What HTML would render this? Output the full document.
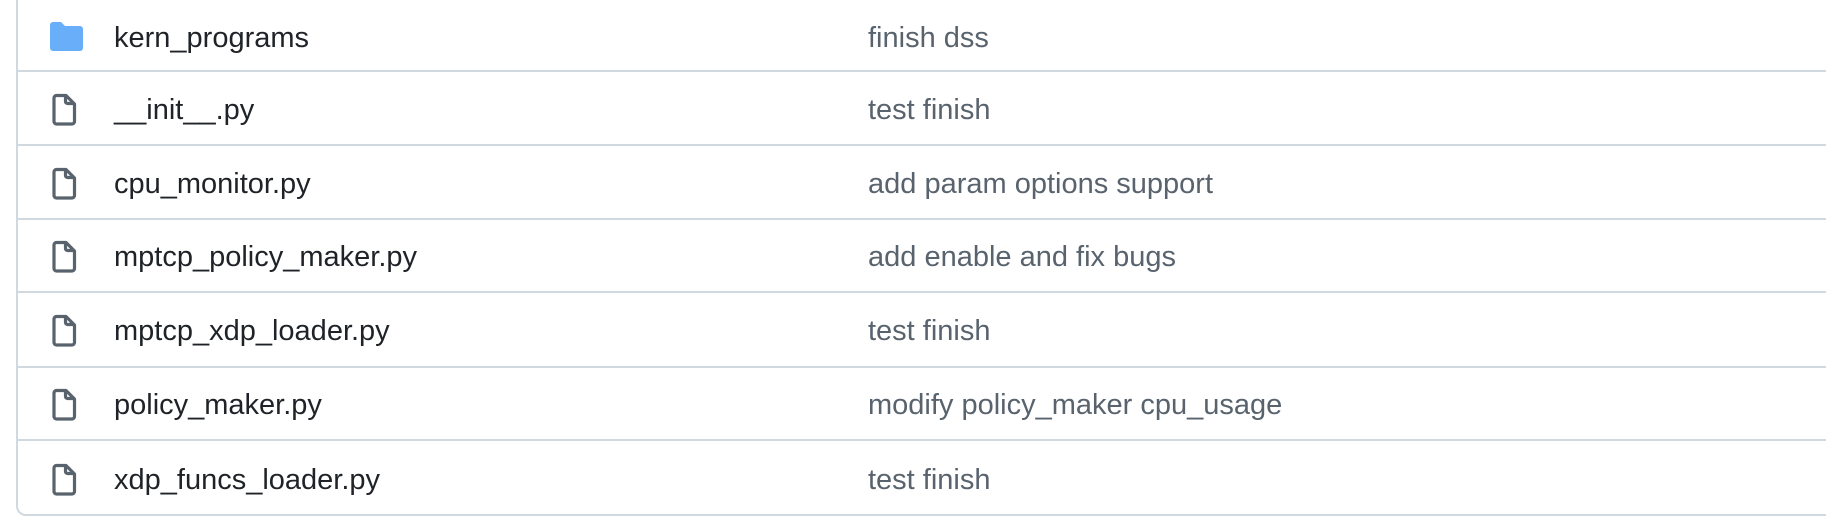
<!DOCTYPE html>
<html><head><meta charset="utf-8"><style>
html,body{margin:0;padding:0;background:#fff;width:1826px;height:522px;overflow:hidden;font-family:"Liberation Sans",Arial,sans-serif}
.box{position:absolute;left:16px;top:-20px;width:1830px;height:536px;border:2px solid #d1d9e0;border-radius:10px;box-sizing:border-box}
.sep{position:absolute;left:17px;right:0;height:2px;background:#d1d9e0}
.row{position:absolute;left:0;width:1826px;height:40px}
.name{position:absolute;left:114px;top:4px;font-size:29px;color:#1f2328;line-height:32px}
.msg{position:absolute;left:868px;top:4px;font-size:29px;color:#59636e;line-height:32px}
.ic{position:absolute;left:50px;top:4px}
</style></head><body>
<div class="box"></div>
<div class="sep" style="top:70px"></div>
<div class="sep" style="top:144px"></div>
<div class="sep" style="top:218px"></div>
<div class="sep" style="top:291px"></div>
<div class="sep" style="top:366px"></div>
<div class="sep" style="top:439px"></div>

<div class="row" style="top:18px">
<svg class="ic" width="33" height="29" viewBox="0 0 33 29" style="top:4px"><path d="M0 3a3 3 0 0 1 3-3h8l4 4h15a3 3 0 0 1 3 3v19a3 3 0 0 1-3 3H3a3 3 0 0 1-3-3z" fill="#68aef8"/></svg>
<div class="name">kern_programs</div><div class="msg">finish dss</div></div>

<div class="row" style="top:90px"><svg class="ic" width="33" height="33" viewBox="0 0 33 33" style="top:3px"><path d="M6.5 2.5h9.5l8.5 8.5v17.5a2.5 2.5 0 0 1-2.5 2.5H6.5a2.5 2.5 0 0 1-2.5-2.5v-23.5a2.5 2.5 0 0 1 2.5-2.5zM15.5 2.5v6a2 2 0 0 0 2 2h6.5" fill="none" stroke="#59636e" stroke-width="3.2" stroke-linejoin="round"/></svg><div class="name">__init__.py</div><div class="msg">test finish</div></div>

<div class="row" style="top:164px"><svg class="ic" width="33" height="33" viewBox="0 0 33 33" style="top:3px"><path d="M6.5 2.5h9.5l8.5 8.5v17.5a2.5 2.5 0 0 1-2.5 2.5H6.5a2.5 2.5 0 0 1-2.5-2.5v-23.5a2.5 2.5 0 0 1 2.5-2.5zM15.5 2.5v6a2 2 0 0 0 2 2h6.5" fill="none" stroke="#59636e" stroke-width="3.2" stroke-linejoin="round"/></svg><div class="name">cpu_monitor.py</div><div class="msg">add param options support</div></div>

<div class="row" style="top:237px"><svg class="ic" width="33" height="33" viewBox="0 0 33 33" style="top:3px"><path d="M6.5 2.5h9.5l8.5 8.5v17.5a2.5 2.5 0 0 1-2.5 2.5H6.5a2.5 2.5 0 0 1-2.5-2.5v-23.5a2.5 2.5 0 0 1 2.5-2.5zM15.5 2.5v6a2 2 0 0 0 2 2h6.5" fill="none" stroke="#59636e" stroke-width="3.2" stroke-linejoin="round"/></svg><div class="name">mptcp_policy_maker.py</div><div class="msg">add enable and fix bugs</div></div>

<div class="row" style="top:311px"><svg class="ic" width="33" height="33" viewBox="0 0 33 33" style="top:3px"><path d="M6.5 2.5h9.5l8.5 8.5v17.5a2.5 2.5 0 0 1-2.5 2.5H6.5a2.5 2.5 0 0 1-2.5-2.5v-23.5a2.5 2.5 0 0 1 2.5-2.5zM15.5 2.5v6a2 2 0 0 0 2 2h6.5" fill="none" stroke="#59636e" stroke-width="3.2" stroke-linejoin="round"/></svg><div class="name">mptcp_xdp_loader.py</div><div class="msg">test finish</div></div>

<div class="row" style="top:385px"><svg class="ic" width="33" height="33" viewBox="0 0 33 33" style="top:3px"><path d="M6.5 2.5h9.5l8.5 8.5v17.5a2.5 2.5 0 0 1-2.5 2.5H6.5a2.5 2.5 0 0 1-2.5-2.5v-23.5a2.5 2.5 0 0 1 2.5-2.5zM15.5 2.5v6a2 2 0 0 0 2 2h6.5" fill="none" stroke="#59636e" stroke-width="3.2" stroke-linejoin="round"/></svg><div class="name">policy_maker.py</div><div class="msg">modify policy_maker cpu_usage</div></div>

<div class="row" style="top:460px"><svg class="ic" width="33" height="33" viewBox="0 0 33 33" style="top:3px"><path d="M6.5 2.5h9.5l8.5 8.5v17.5a2.5 2.5 0 0 1-2.5 2.5H6.5a2.5 2.5 0 0 1-2.5-2.5v-23.5a2.5 2.5 0 0 1 2.5-2.5zM15.5 2.5v6a2 2 0 0 0 2 2h6.5" fill="none" stroke="#59636e" stroke-width="3.2" stroke-linejoin="round"/></svg><div class="name">xdp_funcs_loader.py</div><div class="msg">test finish</div></div>
</body></html>
